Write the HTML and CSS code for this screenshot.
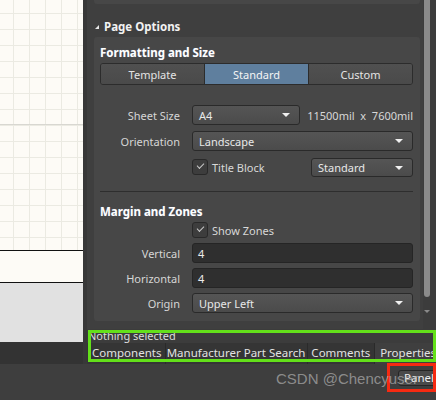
FILE: index.html
```html
<!DOCTYPE html>
<html>
<head>
<meta charset="utf-8">
<title>Properties - Page Options</title>
<link rel="stylesheet" href="styles.css">
</head>
<body>
<div class="window">
  <div class="workspace">
    <div class="doc">
      <div class="sheet"></div>
      <div class="title-strip"></div>
      <div class="offsheet"></div>
      <div class="docbar"></div>
    </div>
    <div class="splitter"></div>
    <div class="panel">
      <div class="panel-main">
        <div class="panel-scroll">
          <div class="top-card"></div>
          <div class="section-head"><span class="caret"></span>Page Options</div>
          <div class="card">
            <div class="card-title">Formatting and Size</div>
            <div class="segmented">
              <div class="seg">Template</div>
              <div class="seg active">Standard</div>
              <div class="seg">Custom</div>
            </div>
            <div class="form form-format">
              <div class="label">Sheet Size</div>
              <div class="ctl">
                <div class="select select-a4">A4</div>
                <div class="dims">11500mil&nbsp; x&nbsp; 7600mil</div>
              </div>
              <div class="label">Orientation</div>
              <div class="select">Landscape</div>
              <div class="label"></div>
              <div class="ctl">
                <div class="check"><span class="box"></span><span>Title Block</span></div>
                <div class="select select-std">Standard</div>
              </div>
            </div>
            <div class="sep"></div>
            <div class="card-title title-zones">Margin and Zones</div>
            <div class="form form-zones">
              <div class="label"></div>
              <div class="check"><span class="box"></span><span>Show Zones</span></div>
              <div class="label">Vertical</div>
              <div class="input">4</div>
              <div class="label">Horizontal</div>
              <div class="input">4</div>
              <div class="label">Origin</div>
              <div class="select">Upper Left</div>
            </div>
          </div>
        </div>
        <div class="scrollbar"><div class="thumb"></div><div class="sb-arrow"></div></div>
        <div class="panel-edge"></div>
      </div>
      <div class="status-line">Nothing selected</div>
      <div class="tabs">
        <div class="tab">Components</div>
        <div class="tab">Manufacturer Part Search</div>
        <div class="tab">Comments</div>
        <div class="tab active">Properties</div>
      </div>
    </div>
  </div>
  <div class="statusbar">
    <div class="panels-btn">Panels</div>
  </div>
  <div class="mark mark-green"></div>
  <div class="mark mark-red"></div>
  <div class="watermark">CSDN @Chencyuser</div>
</div>
</body>
</html>
```

FILE: styles.css
```css
* { box-sizing: border-box; margin: 0; padding: 0; }
html, body { width: 436px; height: 400px; overflow: hidden; background: #3e3e3e; }
body { font-family: "Noto Sans", "Open Sans", sans-serif; font-size: 11px; color: #dcdcdc; }

.window { position: relative; width: 436px; height: 400px; display: flex; flex-direction: column; overflow: hidden; }
.workspace { height: 364px; display: flex; }

/* document canvas */
.doc { width: 83px; display: flex; flex-direction: column; }
.sheet {
  height: 251px;
  background-color: #fdfbf6;
  background-image:
    linear-gradient(#d8d7d1, #d8d7d1),
    linear-gradient(to right, #ebeae2 1px, transparent 1px),
    linear-gradient(#ebeae2 1px, transparent 1px);
  background-size: 100% 1px, 16px 16px, 16px 16px;
  background-position: 0 124px, 13px 0, 0 13px;
  background-repeat: no-repeat, repeat, repeat;
  border-bottom: 1px solid #111;
}
.title-strip { height: 32px; background: #fdfbf6; border-bottom: 1px solid #111; }
.offsheet { flex: 1; background: #e1e1e1; }
.docbar { height: 22px; background: #333333; }

.splitter { width: 4px; background: #383838; }

/* properties panel */
.panel { flex: 1; display: flex; flex-direction: column; background: #3f3f3f; min-width: 0; }
.panel-main { flex: 1; display: flex; min-height: 0; }
.panel-scroll { flex: 1; padding: 0 3px 0 7px; }
.top-card { height: 4px; background: #474747; border-radius: 0 0 3px 3px; }
.section-head {
  height: 33px; padding-top: 12px; line-height: 16px;
  display: flex; align-items: center;
  font-weight: 700; font-size: 11.5px; color: #f2f2f2; padding-left: 1px;
}
.caret {
  width: 0; height: 0; margin-right: 5px; margin-top: 1px;
  border-left: 4px solid transparent; border-bottom: 4px solid #e6e6e6;
}
.card { height: 284px; background: #474747; border-radius: 3px; padding: 8px 7px 0 6px; }
.card-title { line-height: 16px; height: 16px; font-weight: 700; font-size: 11.5px; color: #ffffff; text-shadow: 0 0 1px rgba(160,190,255,.35); }

.segmented {
  margin-top: 2px; height: 22px; display: flex;
  border: 1px solid #2c2c2c; border-radius: 3px; overflow: hidden;
}
.seg {
  flex: 1; display: flex; align-items: center; justify-content: center;
  background: linear-gradient(#505050, #4a4a4a); color: #e4e4e4;
  border-left: 1px solid #2c2c2c;
}
.seg:first-child { border-left: 0; }
.seg.active { background: #5f7f9e; color: #f4f4f4; }

.form { display: grid; grid-template-columns: 80px 1fr; column-gap: 12px; row-gap: 6px; grid-auto-rows: 20px; align-items: stretch; }
.form-format { margin-top: 20px; }
.label { display: flex; align-items: center; justify-content: flex-end; color: #d6d6d6; }
.ctl { display: flex; align-items: center; justify-content: space-between; }

.select {
  position: relative; display: flex; align-items: center; padding-left: 6px;
  background: linear-gradient(#555555, #4b4b4b);
  border: 1px solid #2a2a2a; border-radius: 3px; color: #e8e8e8;
}
.select::after {
  content: ""; position: absolute; right: 9px; top: 7px;
  border-left: 4px solid transparent; border-right: 4px solid transparent; border-top: 4px solid #f0f0f0;
}
.select-a4 { width: 108px; height: 20px; }
.select-std { width: 102px; height: 19px; }
.dims { color: #d8d8d8; padding-right: 0; }

.check { display: flex; align-items: center; gap: 4px; color: #d8d8d8; }
.box {
  width: 16px; height: 16px; position: relative;
  background: #3d3d3d; border: 1px solid #292929; border-radius: 3px;
}
.box::after {
  content: ""; position: absolute; left: 4px; top: 3px; width: 6px; height: 3px;
  border-left: 1px solid #c8c8c8; border-bottom: 1px solid #c8c8c8; transform: rotate(-45deg);
}

.sep { margin-top: 14px; height: 1px; background: #2e2e2e; }
.title-zones { margin-top: 12px; }
.form-zones { margin-top: 2px; grid-template-rows: 16px 20px 20px 20px; row-gap: 5px; }
.input {
  display: flex; align-items: center; padding-left: 5px;
  background: #2f2f2f; border: 1px solid #252525; border-radius: 3px; color: #ececec;
}

.scrollbar { width: 7px; position: relative; background: #3c3c3c; }
.thumb { position: absolute; left: 1px; top: 0; width: 6px; height: 297px; background: #8a8a8a; border-radius: 0 0 3px 3px; }
.sb-arrow {
  position: absolute; left: 1px; top: 310px;
  border-left: 3px solid transparent; border-right: 3px solid transparent; border-top: 3px solid #8a8a8a;
}
.panel-edge { width: 6px; background: #3c3c3c; }

.status-line { height: 14px; line-height: 14px; padding-left: 1px; color: #dcdcdc; background: #3c3c3c; white-space: nowrap; }
.tabs { height: 21px; display: flex; background: #353535; padding-left: 2px; }
.tab {
  display: flex; justify-content: center; line-height: 19px; font-size: 11.5px;
  border-right: 1px solid #2a2a2a; color: #e2e2e2; white-space: nowrap;
}
.tab:nth-child(1) { width: 77px; }
.tab:nth-child(2) { width: 143px; }
.tab:nth-child(3) { width: 68px; }
.tab.active { flex: 1; background: #3f3f3f; border-right: 0; justify-content: flex-start; padding-left: 5px; }

.statusbar { flex: 1; display: flex; justify-content: flex-end; padding-top: 6px; background: #3e3e3e; }
.panels-btn {
  width: 44px; height: 16px; margin-right: -6px; padding-left: 5px; line-height: 14px; font-size: 11.5px;
  background: #4a4a4a; border: 1px solid #262626; border-radius: 3px; color: #f0f0f0; white-space: nowrap; overflow: hidden;
}

/* annotation overlays */
.mark { position: absolute; pointer-events: none; }
.mark-green { left: 88px; top: 330px; width: 348px; height: 32px; border: 3px solid #63e01a; }
.mark-red { left: 387px; top: 363px; width: 49px; height: 29px; border: 3px solid #f52a12; }
.watermark {
  position: absolute; left: 276px; top: 370px;
  font-family: "Liberation Sans", Arial, sans-serif; font-size: 15px; line-height: 18px;
  color: rgba(190, 190, 190, 0.62); white-space: nowrap;
}
```
